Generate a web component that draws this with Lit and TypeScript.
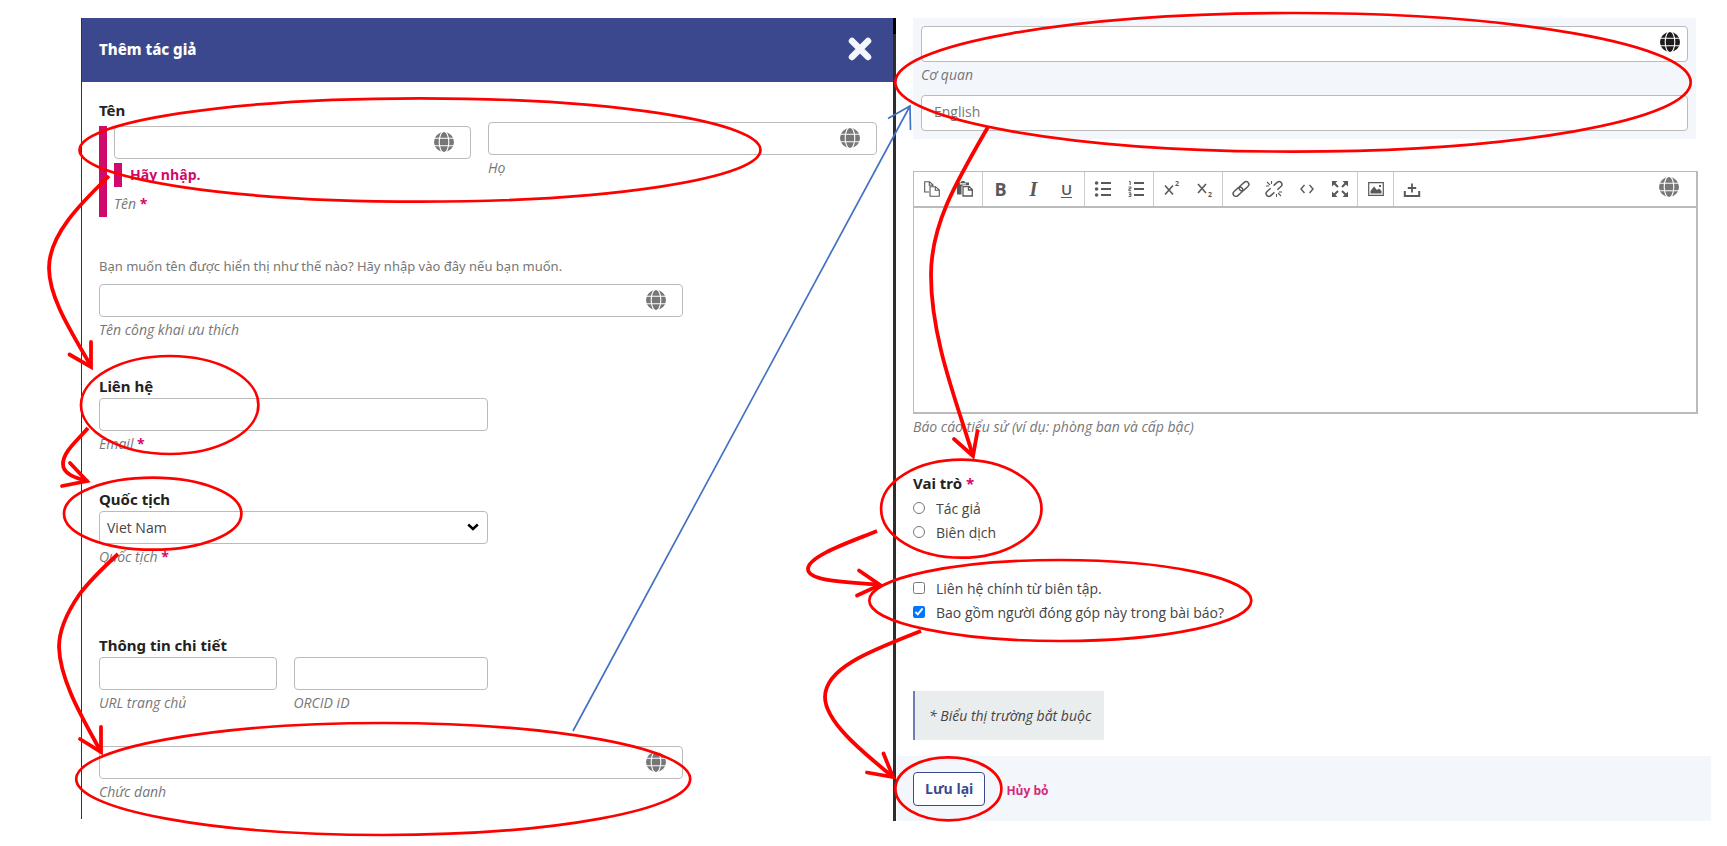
import { LitElement, html, css, svg } from "lit";
import { customElement, property } from "lit/decorators.js";
import { classMap } from "lit/directives/class-map.js";

const globe = html`<svg class="globe" viewBox="0 0 20 20" aria-hidden="true">
  <circle cx="10" cy="10" r="10" fill="currentColor" />
  <g fill="none" stroke="#fff" stroke-width="1.1">
    <ellipse cx="10" cy="10" rx="4.8" ry="10.6" />
    <path d="M0 6.3H20M0 13.8H20" />
  </g>
</svg>`;

const stroke = (d: string, w = 1.4) =>
  svg`<path d=${d} fill="none" stroke="currentColor" stroke-width=${w} />`;
const fill = (d: string) => svg`<path d=${d} fill="currentColor" fill-rule="evenodd" />`;

const icons: Record<string, unknown> = {
  copy: stroke("M6 12H1.7V1.7H6.5L10 5V6M6.3 2V5.3H10M7 6.7H12.5L16.3 10V16.3H7ZM12.3 7V10.3H16", 1.1),
  paste: svg`${fill("M1 2.5H4.5L6 1H8L9.5 2.5H13V5H7L5.5 6.5V14.5H1ZM4 3.2V4.4H10V3.2Z")}
    ${stroke("M7 6.5H13L16.3 9.5V16H7ZM12.5 7V10H16", 1.3)}`,
  bullets: svg`<g fill="currentColor"><circle cx="2.6" cy="3" r="1.8"/><circle cx="2.6" cy="9" r="1.8"/><circle cx="2.6" cy="15" r="1.8"/></g>
    ${stroke("M7 3H17M7 9H17M7 15H17", 2)}`,
  numbers: svg`${stroke("M7 3H17M7 9H17M7 15H17", 2)}
    ${stroke("M2 1.5H3.2V5M1.6 7H3.9V8.8H1.9V10.7H4.2M1.6 12.8H3.9V16.5H1.6M2 14.6H3.9", 1)}`,
  sup: svg`${stroke("M2 5.5L10 14.5M10 5.5L2 14.5", 1.6)}<text class="tiny" x="12" y="6">2</text>`,
  sub: svg`${stroke("M2 4L10 13M10 4L2 13", 1.6)}<text class="tiny" x="12" y="17">2</text>`,
  link: svg`<g transform="rotate(-42 9 9)" fill="none" stroke="currentColor" stroke-width="1.4">
    <rect x="-.6" y="6.2" width="11" height="5.6" rx="2.8"/><rect x="7.6" y="6.2" width="11" height="5.6" rx="2.8"/></g>`,
  unlink: svg`<g transform="rotate(-42 9 9)" fill="none" stroke="currentColor" stroke-width="1.5">
    <path d="M7 6.2H2.2A2.8 2.8 0 0 0 2.2 11.8H7M11 6.2H15.8A2.8 2.8 0 0 1 15.8 11.8H11"/></g>
    ${stroke("M6.5 1V4M1 6H4M2 2L5 5M11.5 17V14M17 12H14M16 16L13 13", 1.1)}`,
  code: stroke("M6.5 5L3 9L6.5 13M11.5 5L15 9L11.5 13", 1.4),
  full: svg`${fill("M1 1H6.5L1 6.5ZM17 1V6.5L11.5 1ZM1 17V11.5L6.5 17ZM17 17H11.5L17 11.5Z")}
    ${stroke("M3 3L7 7M15 3L11 7M3 15L7 11M15 15L11 11", 2)}`,
  image: svg`${stroke("M1.7 2.7H16.3V15.3H1.7Z", 1.2)}${fill("M3.5 13.5V11L7 6.5L10 10L12 8.5L14.5 11V13.5ZM12 5H14V7H12Z")}`,
  upload: svg`${stroke("M1.8 11V16H16.2V11", 2)}${stroke("M9 3.5V12.5M4.8 8H13.2", 1.8)}`,
};

interface Tool {
  label: string;
  icon?: string;
  letter?: string;
}

const toolGroups: Tool[][] = [
  [{ label: "Copy", icon: "copy" }, { label: "Paste", icon: "paste" }],
  [
    { label: "Bold", letter: "B" },
    { label: "Italic", letter: "I" },
    { label: "Underline", letter: "U" },
  ],
  [{ label: "Bullet list", icon: "bullets" }, { label: "Numbered list", icon: "numbers" }],
  [{ label: "Superscript", icon: "sup" }, { label: "Subscript", icon: "sub" }],
  [
    { label: "Insert link", icon: "link" },
    { label: "Remove link", icon: "unlink" },
    { label: "Source code", icon: "code" },
    { label: "Fullscreen", icon: "full" },
  ],
  [{ label: "Insert image", icon: "image" }],
  [{ label: "Upload", icon: "upload" }],
];

@customElement("text-field")
class TextField extends LitElement {
  @property() label = "";
  @property() placeholder = "";
  @property() error = "";
  @property() type = "text";
  @property({ type: Boolean }) required = false;
  @property({ type: Boolean }) localized = false;
  @property({ type: Boolean }) tall = false;
  @property({ type: Boolean }) active = false;

  static styles = css`
    :host { display: block; min-width: 0; }
    .failed { margin-top: 4px; padding-left: 7px; border-left: 8px solid #d00a6c; }
    .box { position: relative; }
    .input {
      display: block; box-sizing: border-box; width: 100%; height: 33px; padding: 0 12px;
      border: 1px solid #bbb; border-radius: 4px; background: #fff; color: #222;
      font: 14px/20px "Open Sans", sans-serif;
    }
    .input::placeholder { color: #777; opacity: 1; }
    .tall { height: 36px; padding-bottom: 3px; }
    .globe { position: absolute; top: 6px; right: 17px; width: 20px; height: 20px; color: #777; }
    .active .globe { right: 8px; color: #1c1c1c; }
    .error {
      margin: 4px 0; padding-left: 8px; border-left: 8px solid #d00a6c;
      color: #d00a6c; font-weight: 700; line-height: 24px;
    }
    .label { display: block; color: #777; font-style: italic; line-height: 26px; }
    .star { color: #d00a6c; font-style: normal; font-weight: 700; }
  `;

  render() {
    return html`<div class=${classMap({ failed: !!this.error })}>
      <div class=${classMap({ box: true, active: this.active })}>
        <input id="field" class=${classMap({ input: true, tall: this.tall })} type=${this.type}
          placeholder=${this.placeholder} aria-label=${this.label || this.placeholder} />
        ${this.localized ? globe : ""}
      </div>
      ${this.error ? html`<div class="error">${this.error}</div>` : ""}
      ${this.label
        ? html`<label class="label" for="field">${this.label}
            ${this.required ? html`<span class="star">*</span>` : ""}</label>`
        : ""}
    </div>`;
  }
}

@customElement("app-root")
class AppRoot extends LitElement {
  static styles = css`
    :host {
      display: block; position: relative; background: #fff; color: #222;
      font: 14px/24px "Open Sans", sans-serif;
    }
    .page {
      display: grid; grid-template-columns: minmax(0, 812fr) 3px minmax(0, 815fr);
      align-items: start; padding: 18px 16px 24px 81px;
    }
    .author { border-left: 1px solid #333; }
    .header {
      display: flex; align-items: center; justify-content: space-between;
      box-sizing: border-box; height: 64px; padding: 0 21px 2px 17px;
      background: #3b488e; color: #fff;
    }
    .title { margin: 0; font: 800 15px/24px "Noto Sans", sans-serif; }
    .close { width: 24px; height: 24px; padding: 0; border: 0; background: none; color: #f3f6fc; }
    .close svg { display: block; width: 24px; height: 24px; }
    .form { padding: 16px 16px 14px 17px; }
    .section { margin-bottom: 30px; }
    .names { margin-bottom: 37px; }
    .public { margin-bottom: 31px; }
    .loose { margin-bottom: 63px; }
    .heading { margin: 0; font: 700 15px/24px "Noto Sans", sans-serif; }
    .pair { display: grid; grid-template-columns: 1fr 1fr; }
    .pair > :first-child { margin-right: 17px; }
    .half { width: 50%; }
    .wide { width: 75%; }
    .hint { margin: 0 0 6px; color: #777; font: 13px/24px "Noto Sans", sans-serif; }
    .select-box { position: relative; }
    .select {
      display: block; box-sizing: border-box; width: 100%; height: 33px; padding: 0 7px;
      border: 1px solid #bbb; border-radius: 4px; background: #fff; color: #444;
      font: 14px/20px "Open Sans", sans-serif; appearance: none;
    }
    .chevron { position: absolute; right: 9px; top: 12px; width: 12px; height: 8px; pointer-events: none; }
    .label { display: block; color: #777; font-style: italic; line-height: 26px; }
    .star { color: #d00a6c; font-style: normal; font-weight: 700; }
    .divider { align-self: stretch; background: linear-gradient(#000 16px, #2d2d2d 16px); }
    .details { padding-left: 17px; }
    .affiliation {
      display: grid; gap: 7px; margin: 0 15px 32px 0; padding: 8px; background: #f3f6fb;
    }
    .biography { margin: 0 13px 31px 0; }
    .editor { border: 1px solid #bbb; border-right-width: 2px; border-bottom-width: 2px; }
    .toolbar { display: flex; align-items: center; border-bottom: 2px solid #bbb; }
    .group { display: flex; padding: 0 1px; border-right: 1px solid #ccc; }
    .group:nth-last-of-type(1) { border-right: 0; }
    .tool {
      display: flex; align-items: center; justify-content: center; width: 33px; height: 34px;
      padding: 0; border: 0; background: none; color: #595959;
      font: 700 18px/24px "Open Sans", sans-serif;
    }
    .tool svg { width: 18px; height: 18px; overflow: visible; }
    .tiny { font: 700 7px "Open Sans", sans-serif; fill: currentColor; }
    .I { font: italic 700 20px/24px "Liberation Serif", serif; }
    .U { font-weight: 600; font-size: 15px; text-decoration: underline; text-underline-offset: 2px; }
    .globe { width: 20px; height: 20px; margin: 0 17px 5px auto; color: #777; }
    .text {
      display: block; box-sizing: border-box; width: 100%; height: 204px; padding: 8px;
      border: 0; resize: none; font: inherit;
    }
    .options { margin: 0; padding: 0; border: 0; }
    .roles { margin-bottom: 32px; }
    .roles .heading { margin-bottom: 2px; padding: 0; }
    .option { display: flex; align-items: center; gap: 11px; color: #444; }
    .check { width: 12px; height: 12px; margin: 0 0 3px; flex: none; }
    .note {
      width: fit-content; margin: 66px 0 16px; padding: 13px 13px 12px 14px; border-left: 2px solid #6f7db8;
      background: #e9edee; color: #444; font-style: italic;
    }
    .footer {
      display: flex; align-items: center; gap: 21px; margin-left: -16px; padding: 16px 16px 15px;
      background: #f3f6fb;
    }
    .save {
      height: 34px; padding: 0 11px; border: 1px solid #3b488e; border-radius: 4px;
      background: #fff; color: #3b488e; font: 700 14px/20px "Open Sans", sans-serif;
    }
    .cancel { padding-top: 4px; color: #d6267d; font-size: 12px; font-weight: 700; text-decoration: none; }
    .marks {
      position: absolute; inset: 0; width: 100%; height: 846px; overflow: visible; pointer-events: none;
    }
  `;

  private toolButton(tool: Tool) {
    return html`<button class="tool ${tool.letter ?? ""}" type="button" aria-label=${tool.label}>
      ${tool.letter ?? html`<svg viewBox="0 0 18 18" aria-hidden="true">${icons[tool.icon!]}</svg>`}
    </button>`;
  }

  private marks() {
    return html`<svg class="marks" viewBox="0 0 1727 846" preserveAspectRatio="none" aria-hidden="true">
      <g fill="none" stroke="#f00" stroke-width="2.7">
        <ellipse cx="420" cy="150" rx="340.5" ry="51.7" />
        <ellipse cx="169.7" cy="405" rx="88.7" ry="49" />
        <ellipse cx="152.7" cy="513.7" rx="88.7" ry="36" />
        <ellipse cx="383.2" cy="779" rx="307" ry="56" />
        <ellipse cx="1293" cy="82.3" rx="397.7" ry="69.3" />
        <ellipse cx="961.3" cy="508.7" rx="80.2" ry="49" />
        <ellipse cx="1060.3" cy="600.5" rx="191" ry="40.5" />
        <ellipse cx="948.4" cy="788.8" rx="53" ry="31.5" />
      </g>
      <g fill="none" stroke="#f00" stroke-width="3.8">
        <path d="M109 176C80 204 49 235 49 268C49 298 72 333 91 366" />
        <path d="M88 428C76 442 63 452 63 464C63 474 75 478 88 481" />
        <path d="M118 554C105 566 90 580 79 595C66 614 59 630 59 647C60 682 85 722 101 752" />
        <path d="M988 127C955 184 931 225 931 275C931 340 958 405 973 456" />
        <path d="M877 531C850 542 808 556 808 569C808 582 850 582 880 585" />
        <path d="M921 631C870 651 825 668 825 697C825 721 860 750 893 777" />
        <g stroke-linecap="round">
          <path d="M69.5 354.5L91 367L91 342" />
          <path d="M70 463L87 481L62 486" />
          <path d="M80 739L101 752L101 727" />
          <path d="M954 439L973 456L977.5 431" />
          <path d="M859 570.5L880 585L857 595.5" />
          <path d="M867 772.5L893 777L883.5 753.5" />
        </g>
      </g>
      <path d="M573 731L910 106M888 118.5L910 106L910.5 130" fill="none" stroke="#4472c4" stroke-width="1.7" />
    </svg>`;
  }

  render() {
    return html`<main class="page">
        <section class="author">
          <header class="header">
            <h1 class="title">Thêm tác giả</h1>
            <button class="close" type="button" aria-label="Đóng">
              <svg viewBox="0 0 24 24"><path d="M4 4L20 20M20 4L4 20" stroke="currentColor" stroke-width="6.5" stroke-linecap="round" /></svg>
            </button>
          </header>
          <div class="form">
            <div class="section names">
              <h2 class="heading">Tên</h2>
              <div class="pair">
                <text-field label="Tên" error="Hãy nhập." required localized></text-field>
                <text-field label="Họ" localized></text-field>
              </div>
            </div>
            <div class="section public">
              <p class="hint">Bạn muốn tên được hiển thị như thế nào? Hãy nhập vào đây nếu bạn muốn.</p>
              <text-field class="wide" label="Tên công khai ưu thích" localized></text-field>
            </div>
            <div class="section">
              <h2 class="heading">Liên hệ</h2>
              <text-field class="half" label="Email" type="email" required></text-field>
            </div>
            <div class="section loose">
              <h2 class="heading">Quốc tịch</h2>
              <div class="half">
                <div class="select-box">
                  <select id="country" class="select"><option>Viet Nam</option></select>
                  <svg class="chevron" viewBox="0 0 12 8"><path d="M1.2 1.5L6 6L10.8 1.5" fill="none" stroke="#000" stroke-width="2.4" /></svg>
                </div>
                <label class="label" for="country">Quốc tịch <span class="star">*</span></label>
              </div>
            </div>
            <div class="section">
              <h2 class="heading">Thông tin chi tiết</h2>
              <div class="pair half">
                <text-field label="URL trang chủ" type="url"></text-field>
                <text-field label="ORCID iD"></text-field>
              </div>
            </div>
            <text-field class="wide" label="Chức danh" localized></text-field>
          </div>
        </section>
        <div class="divider"></div>
        <section class="details">
          <div class="affiliation">
            <text-field label="Cơ quan" localized tall active></text-field>
            <text-field placeholder="English" tall></text-field>
          </div>
          <div class="biography">
            <div class="editor">
              <div class="toolbar">
                ${toolGroups.map((g) => html`<div class="group">${g.map((t) => this.toolButton(t))}</div>`)}
                ${globe}
              </div>
              <textarea id="bio" class="text"></textarea>
            </div>
            <label class="label" for="bio">Báo cáo tiểu sử (ví dụ: phòng ban và cấp bậc)</label>
          </div>
          <fieldset class="options roles">
            <legend class="heading">Vai trò <span class="star">*</span></legend>
            <label class="option"><input class="check" type="radio" name="role" />Tác giả</label>
            <label class="option"><input class="check" type="radio" name="role" />Biên dịch</label>
          </fieldset>
          <div class="options">
            <label class="option"><input class="check" type="checkbox" />Liên hệ chính từ biên tập.</label>
            <label class="option"><input class="check" type="checkbox" checked />Bao gồm người đóng góp này trong bài báo?</label>
          </div>
          <p class="note">* Biểu thị trường bắt buộc</p>
          <footer class="footer">
            <button class="save" type="button">Lưu lại</button>
            <a class="cancel" href="#">Hủy bỏ</a>
          </footer>
        </section>
      </main>
      ${this.marks()}`;
  }
}
